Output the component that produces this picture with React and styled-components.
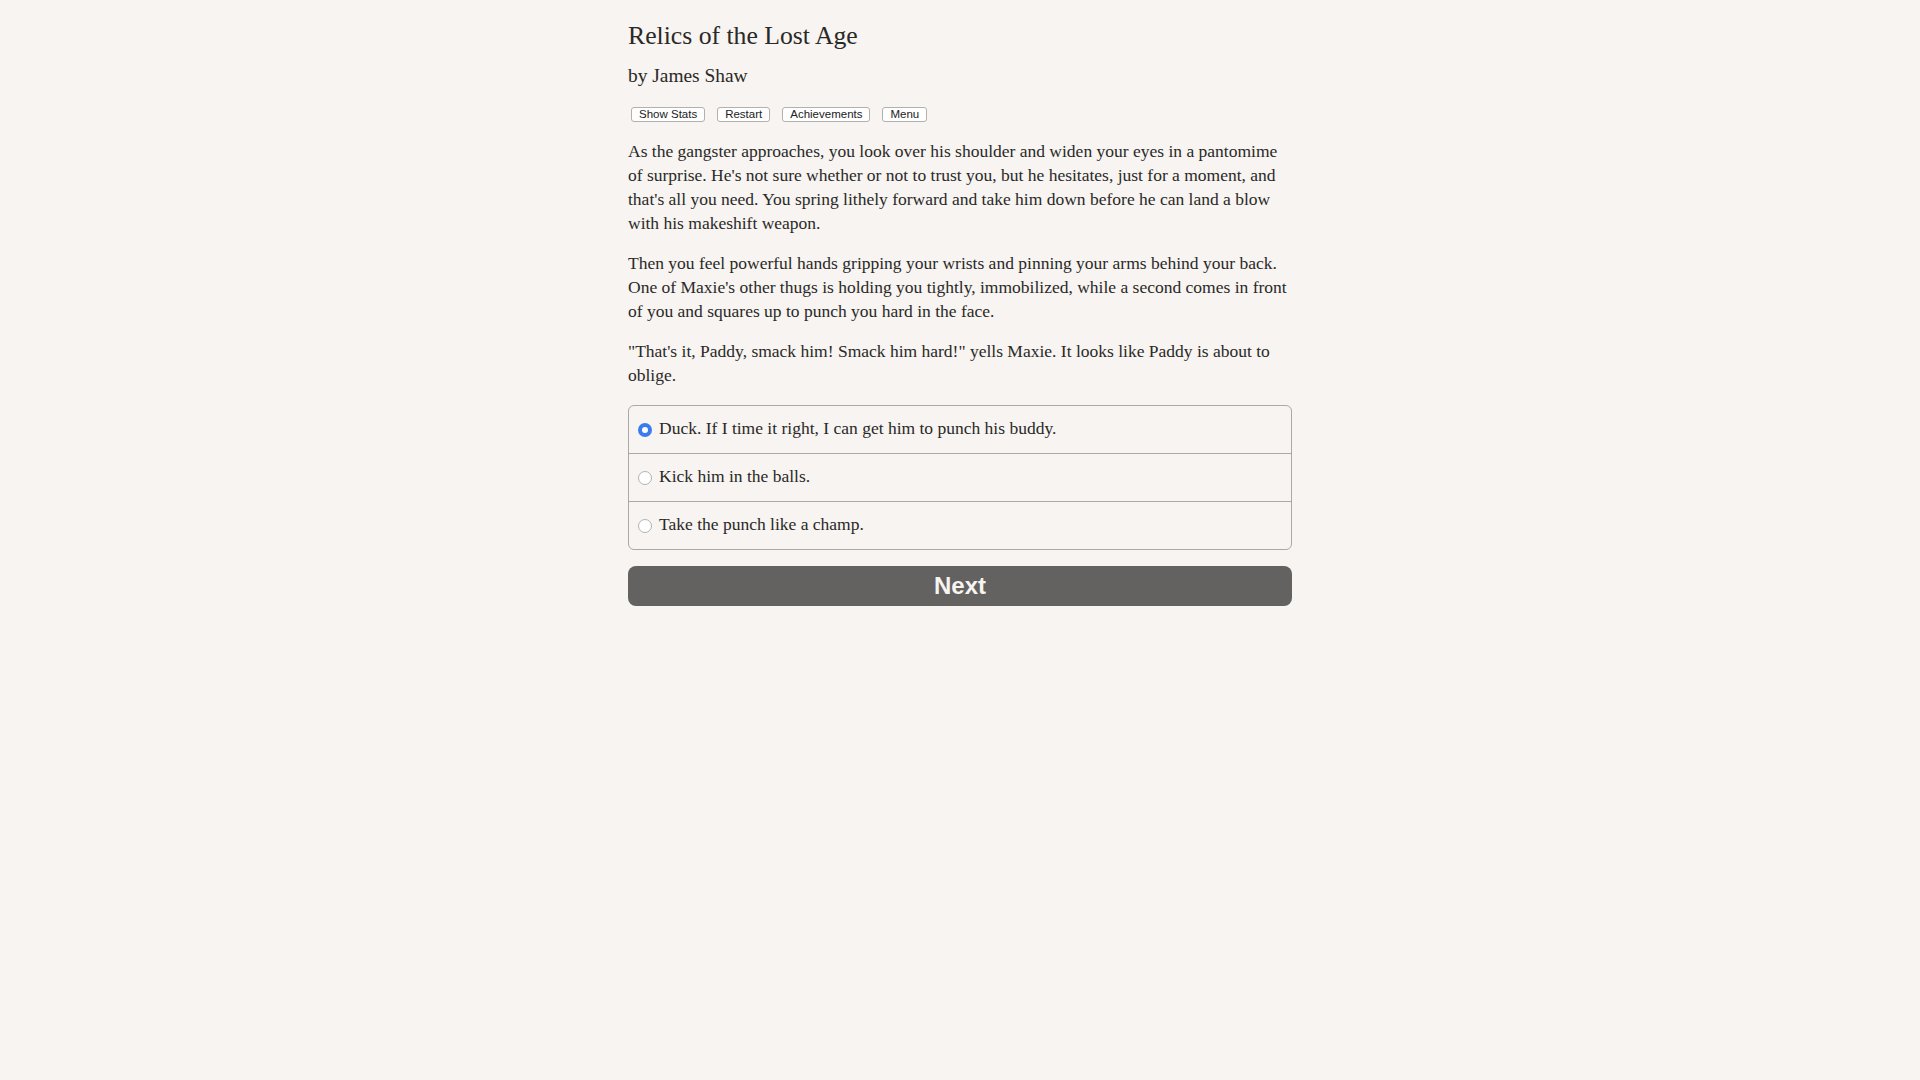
import React, { useState } from "react";
import styled, { createGlobalStyle } from "styled-components";

const choices = [
  "Duck. If I time it right, I can get him to punch his buddy.",
  "Kick him in the balls.",
  "Take the punch like a champ."
];

const App = () => {
  const [picked, setPicked] = useState(0);

  return (
    <>
      <Global />
      <Page>
        <Title>Relics of the Lost Age</Title>
        <Author>by James Shaw</Author>

        <Toolbar>
          <Tool>Show Stats</Tool>
          <Tool>Restart</Tool>
          <Tool>Achievements</Tool>
          <Tool>Menu</Tool>
        </Toolbar>

        <Text>
          As the gangster approaches, you look over his shoulder and widen your
          eyes in a pantomime of surprise. He's not sure whether or not to trust
          you, but he hesitates, just for a moment, and that's all you need. You
          spring lithely forward and take him down before he can land a blow
          with his makeshift weapon.
        </Text>
        <Text>
          Then you feel powerful hands gripping your wrists and pinning your
          arms behind your back. One of Maxie's other thugs is holding you
          tightly, immobilized, while a second comes in front of you and squares
          up to punch you hard in the face.
        </Text>
        <Text>
          "That's it, Paddy, smack him! Smack him hard!" yells Maxie. It looks
          like Paddy is about to oblige.
        </Text>

        <Choices>
          {choices.map((c, i) => (
            <Choice key={i} onClick={() => setPicked(i)}>
              <Radio $on={picked === i} />
              <ChoiceText>{c}</ChoiceText>
            </Choice>
          ))}
        </Choices>

        <Next>Next</Next>
      </Page>
    </>
  );
};

export default App;

const Global = createGlobalStyle`
  html, body {
    margin: 0;
    background-color: #f7f4f1;
  }
`;

const Page = styled.div`
  width: 664px;
  margin: 0 auto;
  padding-top: 18px;
  font-family: "Liberation Serif", "DejaVu Serif", serif;
  color: #2a2927;
`;

const Title = styled.h1`
  margin: 0;
  font-size: 25.7px;
  font-weight: normal;
  line-height: 36px;
`;

const Author = styled.h2`
  margin: 8px 0 0;
  font-size: 19.4px;
  font-weight: normal;
  line-height: 28px;
`;

const Toolbar = styled.div`
  display: flex;
  gap: 12px;
  margin: 17px 0 0 3px;
`;

const Tool = styled.button`
  height: 15px;
  padding: 0 7px;
  border: 1px solid #b3b1ae;
  border-radius: 3px;
  background-color: #ffffff;
  color: #222;
  font-family: "Liberation Sans", Arial, sans-serif;
  font-size: 11.5px;
  line-height: 13px;
`;

const Text = styled.p`
  margin: 16px 0 0;
  font-size: 17.5px;
  line-height: 24px;

  &:first-of-type {
    margin-top: 17px;
  }
`;

const Choices = styled.div`
  margin-top: 18px;
  border: 1px solid #aaa9a7;
  border-radius: 6px;
  overflow: hidden;
`;

const Choice = styled.label`
  display: flex;
  align-items: center;
  height: 47px;
  padding-left: 9px;
  font-size: 17.5px;
  cursor: pointer;

  & + & {
    border-top: 1px solid #aaa9a7;
  }
`;

const ChoiceText = styled.span`
  padding-bottom: 3px;
`;

const Radio = styled.span`
  box-sizing: border-box;
  width: 14px;
  height: 14px;
  margin-right: 7px;
  border-radius: 50%;
  border: ${(p) => (p.$on ? "4.5px solid #3a7cf0" : "1px solid #b5b3b0")};
  background-color: #ffffff;
  flex-shrink: 0;
`;

const Next = styled.button`
  display: block;
  width: 100%;
  height: 40px;
  margin-top: 16px;
  border: none;
  border-radius: 8px;
  background-color: #636260;
  color: #f7f4f1;
  font-family: "Liberation Sans", Arial, sans-serif;
  font-size: 24px;
  font-weight: bold;
  cursor: pointer;
`;
